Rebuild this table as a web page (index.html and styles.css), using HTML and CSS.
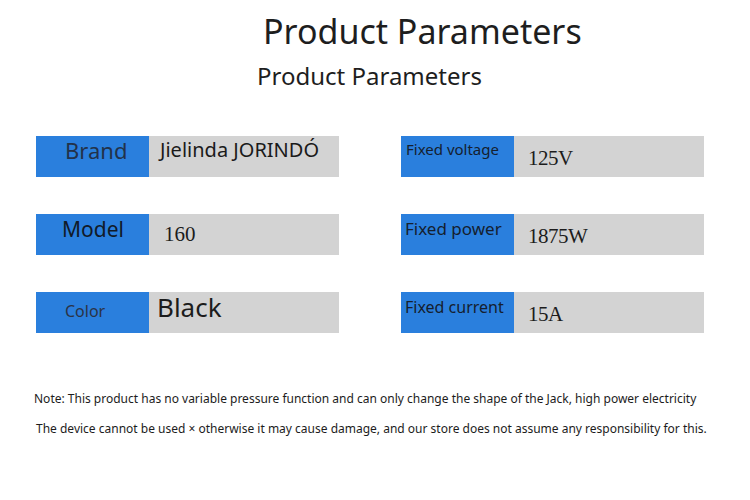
FILE: index.html
```html
<!DOCTYPE html>
<html>
<head>
<meta charset="utf-8">
<link rel="stylesheet" href="styles.css">
</head>
<body>
<div class="page">
  <h1 class="title">Product Parameters</h1>
  <h2 class="subtitle">Product Parameters</h2>
  <div class="tables">
    <div class="table">
      <div class="row r1">
        <div class="label l-brand">Brand</div>
        <div class="value v-brand">Jielinda JORINDÓ</div>
      </div>
      <div class="row r2">
        <div class="label l-model">Model</div>
        <div class="value v-serif v-model">160</div>
      </div>
      <div class="row r3">
        <div class="label l-color">Color</div>
        <div class="value v-black">Black</div>
      </div>
    </div>
    <div class="table">
      <div class="row r1">
        <div class="label l-fixed l-volt">Fixed voltage</div>
        <div class="value v-serif v-r">125V</div>
      </div>
      <div class="row r2">
        <div class="label l-fixed l-power">Fixed power</div>
        <div class="value v-serif v-r">1875W</div>
      </div>
      <div class="row r3">
        <div class="label l-fixed l-current">Fixed current</div>
        <div class="value v-serif v-r">15A</div>
      </div>
    </div>
  </div>
  <div class="notes">
    <p class="note n1">Note: This product has no variable pressure function and can only change the shape of the Jack, high power electricity</p>
    <p class="note n2">The device cannot be used × otherwise it may cause damage, and our store does not assume any responsibility for this.</p>
  </div>
</div>
</body>
</html>
```

FILE: styles.css
```css
html, body {
  margin: 0;
  padding: 0;
  background: #ffffff;
}
body {
  width: 750px;
  height: 500px;
  overflow: hidden;
  font-family: "Noto Sans", "Open Sans", sans-serif;
  color: #1c1c1c;
}
.page {
  display: flex;
  flex-direction: column;
}
.title {
  margin: 8px 0 0 263px;
  font-weight: 400;
  font-size: 34px;
  line-height: 46px;
  color: #1e1e1e;
}
.subtitle {
  margin: 8px 0 0 257px;
  font-weight: 400;
  font-size: 24px;
  line-height: 28px;
  color: #1e1e1e;
}
.tables {
  display: flex;
  gap: 62px;
  margin: 46px 0 0 36px;
}
.table {
  display: flex;
  flex-direction: column;
  gap: 37px;
  width: 303px;
}
.row {
  display: flex;
  height: 41px;
}
.label {
  width: 113px;
  flex: none;
  background: #2a7fdd;
  color: #22324a;
  box-sizing: border-box;
}
.value {
  flex: 1;
  background: #d3d3d3;
  color: #1c1c1c;
  box-sizing: border-box;
}
.l-brand {
  font-size: 22px;
  line-height: 28px;
  padding-left: 29px;
}
.l-model {
  font-size: 21px;
  line-height: 30px;
  padding-left: 26px;
  color: #111a28;
}
.l-color {
  font-size: 16px;
  line-height: 38px;
  padding-left: 29px;
  color: #2a3346;
}
.l-fixed {
  padding-left: 5px;
  color: #15202e;
  white-space: nowrap;
}
.l-volt {
  font-size: 15px;
  line-height: 26px;
}
.l-power {
  font-size: 17px;
  line-height: 30px;
  padding-left: 4px;
}
.l-current {
  font-size: 16px;
  line-height: 30px;
  padding-left: 4px;
}
.v-brand {
  font-size: 20px;
  line-height: 28px;
  padding-left: 11px;
  color: #1a1a1a;
}
.v-serif {
  font-family: "Liberation Serif", "DejaVu Serif", serif;
  font-size: 21px;
}
.v-model {
  line-height: 40px;
  padding-left: 15px;
}
.v-r {
  line-height: 44px;
  padding-left: 14px;
  letter-spacing: -0.5px;
}
.v-black {
  font-size: 26px;
  line-height: 30px;
  padding-left: 8px;
}
.notes {
  display: flex;
  flex-direction: column;
  margin-top: 51px;
}
.note {
  margin: 0;
  font-size: 12px;
  line-height: 30px;
  color: #1c1c1c;
  white-space: nowrap;
}
.n1 {
  padding-left: 34px;
}
.n2 {
  padding-left: 36px;
}
```
